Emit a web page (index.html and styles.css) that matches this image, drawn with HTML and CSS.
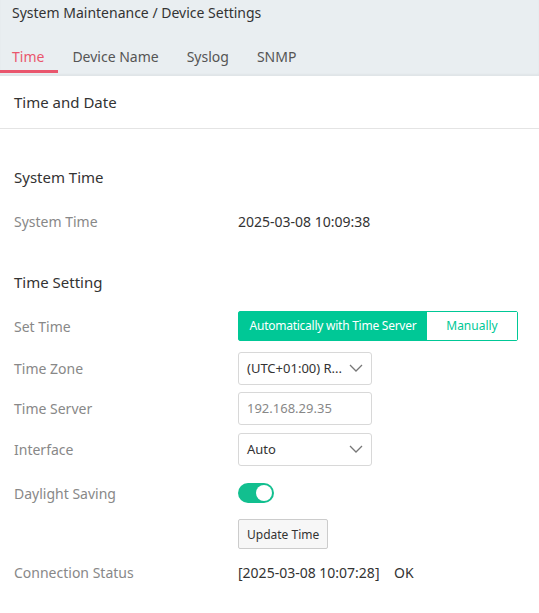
FILE: index.html
```html
<!DOCTYPE html>
<html lang="en">
<head>
    <meta charset="UTF-8">
    <title>Device Settings</title>
    <link rel="stylesheet" href="styles.css">
</head>
<body>
    <div class="top">
        <div class="crumb">System Maintenance / Device Settings</div>
        <div class="tabs">
            <span class="tab active">Time</span>
            <span class="tab">Device Name</span>
            <span class="tab">Syslog</span>
            <span class="tab">SNMP</span>
        </div>
    </div>

    <div class="panel">
        <div class="panel-title">Time and Date</div>

        <div class="section section-first">
            <h3>System Time</h3>
            <div class="row">
                <span class="label">System Time</span>
                <span class="value">2025-03-08 10:09:38</span>
            </div>
        </div>

        <div class="section">
            <h3>Time Setting</h3>
            <div class="row row-btns">
                <span class="label">Set Time</span>
                <div class="seg">
                    <span class="seg-item on">Automatically with Time Server</span>
                    <span class="seg-item manual">Manually</span>
                </div>
            </div>
            <div class="row row-field">
                <span class="label">Time Zone</span>
                <div class="select">
                    <span>(UTC+01:00) R...</span>
                    <svg width="14" height="8" viewBox="0 0 14 8"><path d="M1 1l6 6 6-6" fill="none" stroke="#777" stroke-width="1.3"/></svg>
                </div>
            </div>
            <div class="row row-field">
                <span class="label">Time Server</span>
                <div class="input">192.168.29.35</div>
            </div>
            <div class="row row-iface">
                <span class="label">Interface</span>
                <div class="select">
                    <span>Auto</span>
                    <svg width="14" height="8" viewBox="0 0 14 8"><path d="M1 1l6 6 6-6" fill="none" stroke="#777" stroke-width="1.3"/></svg>
                </div>
            </div>
            <div class="row row-toggle">
                <span class="label">Daylight Saving</span>
                <span class="toggle"><span class="knob"></span></span>
            </div>
            <div class="row row-update">
                <span class="label"></span>
                <button class="btn">Update Time</button>
            </div>
            <div class="row row-status">
                <span class="label">Connection Status</span>
                <span class="value">[2025-03-08 10:07:28]&nbsp;&nbsp;&nbsp; OK</span>
            </div>
        </div>
    </div>
</body>
</html>
```

FILE: styles.css
```css
body {
    margin: 0;
    font-family: "Noto Sans", "Open Sans", sans-serif;
    font-size: 14px;
    color: #333;
    background: #fff;
}

.top {
    background-color: #e9eef1;
    height: 76px;
    box-shadow: inset 0 -2px 2px rgba(0, 0, 0, 0.04);
}

.crumb {
    padding: 3px 12px 0;
    height: 22px;
    line-height: 20px;
    color: #333;
}

.tabs {
    display: flex;
    margin-top: 15px;
}

.tab {
    padding: 0 14px;
    height: 30px;
    line-height: 34px;
    color: #555;
    border-bottom: 3px solid transparent;
}

.tab:first-child {
    padding: 0 14px 0 12px;
}

.tab.active {
    color: #e9566d;
    border-bottom-color: #e9566d;
}

.panel-title {
    padding: 0 14px;
    height: 52px;
    line-height: 52px;
    font-size: 15px;
    color: #333;
    border-bottom: 1px solid #e4e4e4;
}

.section {
    padding: 0 14px;
}

.section-first {
    padding-top: 26px;
}

.section + .section {
    margin-top: 17px;
}

.section h3 {
    font-size: 15px;
    font-weight: normal;
    color: #333;
    margin: 0;
    height: 44px;
    line-height: 44px;
}

.row {
    display: flex;
    align-items: center;
    height: 44px;
}

.label {
    width: 224px;
    flex: none;
    color: #888;
}

.value {
    color: #333;
}

.seg {
    display: flex;
    border: 1px solid #00c896;
    border-radius: 2px;
    font-size: 12px;
    letter-spacing: -0.25px;
    height: 28px;
}

.seg-item {
    width: 188px;
    text-align: center;
    line-height: 28px;
    color: #00c896;
    background: #fff;
}

.seg-item.on {
    background: #00c896;
    color: #fff;
}

.seg-item.manual {
    width: 90px;
    letter-spacing: 0;
}

.row-field {
    height: 40px;
}

.row-iface {
    height: 42px;
}

.row-toggle {
    height: 46px;
}

.row-update {
    height: 36px;
}

.row-status {
    height: 40px;
}

.select,
.input {
    box-sizing: border-box;
    width: 134px;
    height: 33px;
    border: 1px solid #d8d8d8;
    border-radius: 3px;
    padding: 0 8px;
    display: flex;
    align-items: center;
    justify-content: space-between;
    font-size: 13px;
    color: #333;
}

.input {
    color: #888;
}

.toggle {
    width: 36px;
    height: 20px;
    border-radius: 10px;
    background: #12bf8f;
    position: relative;
}

.knob {
    position: absolute;
    right: 2px;
    top: 2px;
    width: 16px;
    height: 16px;
    border-radius: 50%;
    background: #fff;
}

.btn {
    font-family: inherit;
    font-size: 12px;
    color: #333;
    background: #f7f7f7;
    border: 1px solid #ccc;
    border-radius: 2px;
    height: 30px;
    padding: 0 8px;
}
```
